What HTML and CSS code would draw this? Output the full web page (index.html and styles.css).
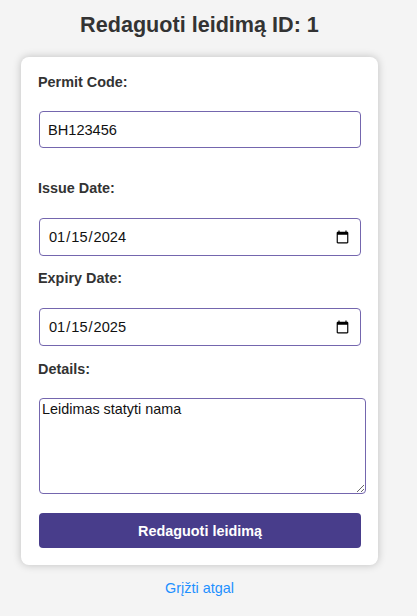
FILE: index.html
```html
<!DOCTYPE html>
<html lang="lt">
<head>
<meta charset="utf-8">
<title>Redaguoti leidimą</title>
<link rel="stylesheet" href="styles.css">
</head>
<body>
<div class="page">
  <h2 class="title">Redaguoti leidimą ID: 1</h2>
  <form class="card">
    <label class="label label-first" for="code">Permit Code:</label>
    <input class="field field-first" id="code" type="text" value="BH123456">
    <label class="label" for="issue">Issue Date:</label>
    <input class="field" id="issue" type="date" value="2024-01-15">
    <label class="label" for="expiry">Expiry Date:</label>
    <input class="field field-last" id="expiry" type="date" value="2025-01-15">
    <label class="label label-first" for="details">Details:</label>
    <textarea class="area" id="details">Leidimas statyti nama</textarea>
    <button class="btn" type="button">Redaguoti leidimą</button>
  </form>
  <a class="back" href="#">Grįžti atgal</a>
</div>
</body>
</html>
```
FILE: styles.css
```css
html, body {
  margin: 0;
  padding: 0;
  background: #f4f4f4;
}
body {
  font-family: "Liberation Sans", Arial, sans-serif;
  color: #333;
}
.page {
  width: 399px;
  display: flex;
  flex-direction: column;
  align-items: center;
}
.title {
  margin: 12px 0 20px;
  font-size: 21.6px;
  line-height: 25px;
  font-weight: bold;
  color: #333;
}
.card {
  box-sizing: border-box;
  width: 357px;
  background: #fff;
  border-radius: 8px;
  box-shadow: 0 0 9px rgba(0, 0, 0, 0.22);
  padding: 17px;
  display: flex;
  flex-direction: column;
  align-items: flex-start;
}
.label {
  display: block;
  font-size: 14.4px;
  line-height: 17px;
  font-weight: bold;
  color: #333;
  margin: 0 0 21px 0;
}
.label-first {
  margin-bottom: 20px;
}
.field {
  box-sizing: border-box;
  width: 322px;
  height: 38px;
  margin: 0 0 14px 1px;
  padding: 0 8px;
  border: 1px solid #7466ae;
  border-radius: 4px;
  font-family: "Liberation Sans", Arial, sans-serif;
  font-size: 14.6px;
  color: #111;
  background: #fff;
  outline: none;
}
.field-first {
  height: 37px;
  margin-bottom: 32px;
}
.field-last {
  margin-bottom: 15px;
}
.area {
  box-sizing: border-box;
  width: 327px;
  height: 96px;
  margin: 0 0 19px 1px;
  padding: 2px;
  border: 1px solid #7466ae;
  border-radius: 4px;
  font-family: "Liberation Sans", Arial, sans-serif;
  font-size: 14.4px;
  line-height: 17px;
  color: #111;
  resize: vertical;
  outline: none;
}
.btn {
  box-sizing: border-box;
  width: 322px;
  height: 35px;
  margin-left: 1px;
  border: none;
  border-radius: 4px;
  background: #483d8b;
  color: #fff;
  font-family: "Liberation Sans", Arial, sans-serif;
  font-size: 14.4px;
  font-weight: bold;
}
.back {
  margin-top: 15px;
  font-size: 14.4px;
  line-height: 17px;
  color: #1e90ff;
  text-decoration: none;
}
```
